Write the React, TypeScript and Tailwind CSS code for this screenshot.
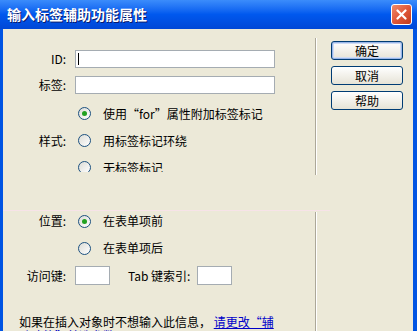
import React from 'react';

const font = "font-['Noto_Sans_CJK_SC','Noto_Sans',sans-serif]";

function Radio({ checked }: { checked?: boolean }) {
  return (
    <span className="flex h-[13px] w-[13px] shrink-0 items-center justify-center rounded-full border border-[#1c5180] bg-gradient-to-br from-[#dcdcd6] to-white">
      {checked && <span className="h-[5px] w-[5px] rounded-full bg-[#21a121]" />}
    </span>
  );
}

function RadioRow({ label, checked, side }: { label: string; checked?: boolean; side?: string }) {
  return (
    <div className="flex h-[27px] items-center">
      <span className="w-[63px] text-right">{side}</span>
      <span className="ml-[12px]">
        <Radio checked={checked} />
      </span>
      <span className="ml-[12px]">{label}</span>
    </div>
  );
}

function XpButton({ label, primary }: { label: string; primary?: boolean }) {
  return (
    <button
      type="button"
      className={[
        'h-[19px] w-[72px] rounded-[3px] border border-[#003c74] bg-gradient-to-b from-white to-[#e6e3d6] text-[12px] leading-none text-black',
        primary ? 'shadow-[inset_0_0_0_1px_#99b6e8,inset_0_0_0_2px_#cfdcf4]' : '',
      ].join(' ')}
    >
      {label}
    </button>
  );
}

function Separator({ className }: { className: string }) {
  return <div className={['w-[2px] border-l border-[#aca899] border-r border-r-white', className].join(' ')} />;
}

export default function App() {
  return (
    <div className={`flex h-[331px] w-[417px] flex-col overflow-hidden bg-[#0054e3] text-[12px] text-black ${font}`}>
      {/* title bar */}
      <div className="flex h-[29px] shrink-0 items-center justify-between bg-gradient-to-b from-[#3b8cfb] via-[#0058ee] to-[#0047d6] pl-[7px] pr-[5px]">
        <span className="text-[14px] font-bold text-white [text-shadow:1px_1px_0_#0a1a6a]">输入标签辅助功能属性</span>
        <span className="flex h-[21px] w-[21px] items-center justify-center rounded-[3px] border border-white bg-gradient-to-br from-[#f08a6a] via-[#e0583a] to-[#c23a1c]">
          <svg width="11" height="11" viewBox="0 0 11 11">
            <path d="M1.5 1.5 L9.5 9.5 M9.5 1.5 L1.5 9.5" stroke="white" strokeWidth="2.2" strokeLinecap="round" />
          </svg>
        </span>
      </div>

      {/* body */}
      <div className="ml-[3px] mr-[4px] flex flex-1 flex-col bg-[#ece9d8]">
        {/* top part */}
        <div className="flex h-[181px]">
          <div className="w-[312px] pt-[21px]">
            <div className="flex h-[18px] items-center">
              <span className="w-[63px] text-right">ID:</span>
              <div className="ml-[9px] flex h-[18px] w-[200px] items-center border border-[#a5acb2] bg-white pl-[2px]">
                <span className="h-[12px] w-px bg-black" />
              </div>
            </div>
            <div className="mt-[8px] flex h-[18px] items-center">
              <span className="w-[63px] text-right">标签:</span>
              <div className="ml-[9px] h-[18px] w-[200px] border border-[#a5acb2] bg-white" />
            </div>
            <div className="mt-[6px] h-[72px] overflow-hidden">
              <RadioRow checked label="使用“for”属性附加标签标记" />
              <RadioRow side="样式:" label="用标签标记环绕" />
              <RadioRow label="无标签标记" />
            </div>
          </div>
          <Separator className="mt-[9px] h-[137px]" />
          <div className="ml-[14px] flex flex-col gap-[6px] pt-[12px]">
            <XpButton primary label="确定" />
            <XpButton label="取消" />
            <XpButton label="帮助" />
          </div>
        </div>

        <div className="h-px w-[327px] bg-[#f7e3e8]" />

        {/* bottom part */}
        <div className="flex flex-1">
          <div className="w-[312px]">
            <div className="flex h-[20px] items-center">
              <span className="w-[63px] text-right">位置:</span>
              <span className="ml-[12px]">
                <Radio checked />
              </span>
              <span className="ml-[12px]">在表单项前</span>
            </div>
            <div className="mt-[7px] flex h-[20px] items-center">
              <span className="w-[63px]" />
              <span className="ml-[12px]">
                <Radio />
              </span>
              <span className="ml-[12px]">在表单项后</span>
            </div>
            <div className="mt-[8px] flex h-[19px] items-center">
              <span className="w-[63px] text-right">访问键:</span>
              <div className="ml-[9px] h-[19px] w-[35px] border border-[#a5acb2] bg-white" />
              <span className="ml-[18px]">Tab 键索引:</span>
              <div className="ml-[7px] h-[19px] w-[35px] border border-[#a5acb2] bg-white" />
            </div>
            <p className="ml-[16px] mt-[30px] w-[270px] leading-[14px]">
              如果在插入对象时不想输入此信息，{' '}
              <span className="text-[#0000c8] underline">
                请更改“辅
                <br />
                助功能”首选参数
              </span>
              。
            </p>
          </div>
          <Separator className="mt-px self-stretch" />
          <div className="flex-1" />
        </div>
      </div>
    </div>
  );
}
